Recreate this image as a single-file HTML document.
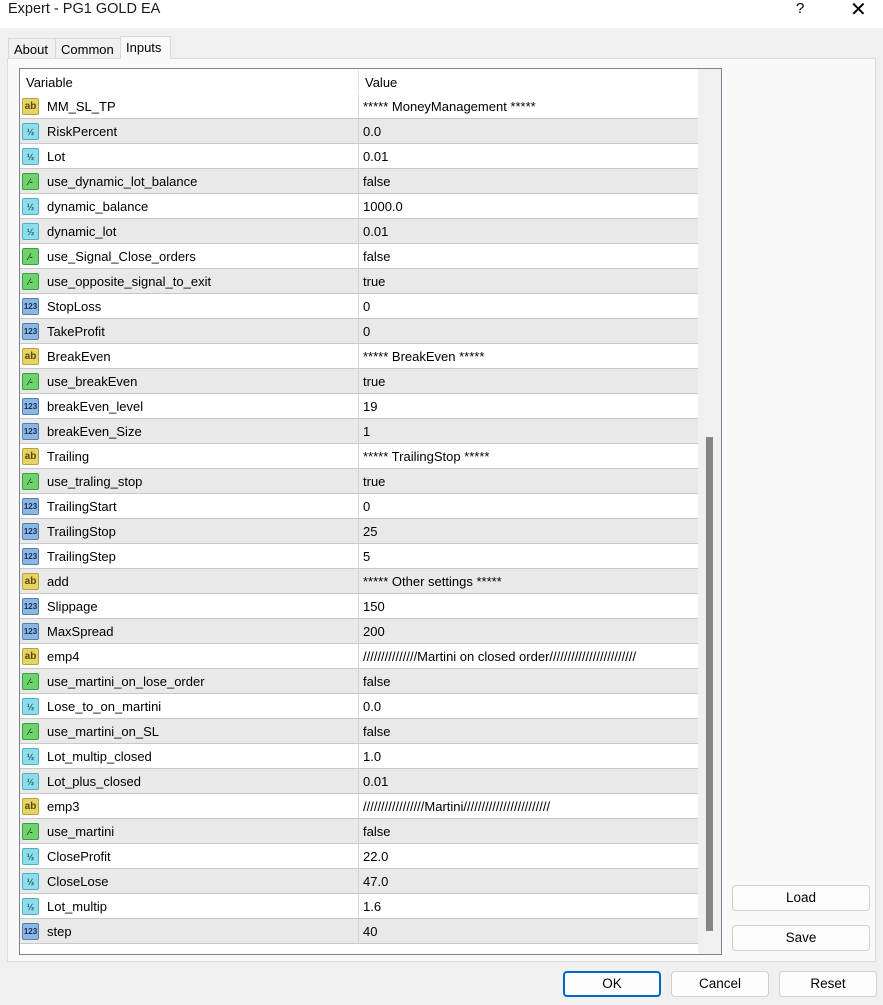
<!DOCTYPE html>
<html><head><meta charset="utf-8"><style>
*{box-sizing:border-box;margin:0;padding:0}
body{width:883px;height:1005px;background:#f0f0f0;font-family:"Liberation Sans",sans-serif;font-size:13px;color:#000;position:relative;overflow:hidden}
.title{position:absolute;left:0;top:0;width:883px;height:28px;background:#fff}
.title .t{position:absolute;left:8px;top:1px;font-size:14.5px;color:#1a1a1a}
.title .q{position:absolute;left:796px;top:0px;font-size:15px}
.title .x{position:absolute;left:850px;top:-3px;font-size:20px;font-weight:300}
.tab{position:absolute;top:38px;height:21px;border:1px solid #d9d9d9;border-bottom:none;background:#f0f0f0;padding:3px 0 0 5px;font-size:13px}
.tab.a{top:36px;height:23px;background:#f9f9f9;padding-top:3px}
.panel{position:absolute;left:7px;top:58px;width:869px;height:904px;background:#f9f9f9;border:1px solid #dcdcdc}
.list{position:absolute;left:19px;top:68px;width:703px;height:887px;border:1px solid #7d8490;background:#fff}
.hdr{position:absolute;left:0;top:0;width:678px;height:25px;background:#fff}
.hdr span{position:absolute;top:6px}
.hdr i{position:absolute;left:338px;top:1px;width:1px;height:22px;background:#e0e0e0}
.rows{position:absolute;left:0;top:25px;width:678px}
.r{height:25px;position:relative;border-bottom:1px solid #c8c8c8;background:#fff}
.r:nth-child(even){background:#e9e9e9}
.r .n{position:absolute;left:27px;top:5px}
.r .v{position:absolute;left:343px;top:5px}
.r .c{position:absolute;left:338px;top:0;width:1px;height:24px;background:#d4d4d4}
.ic{position:absolute;left:2px;top:4px;width:17px;height:17px;border-radius:2px;font-size:9px;font-weight:bold;text-align:center;line-height:16px}
.s{background:#e6d36a;border:1px solid #b8a23a;color:#5a4a00;font-size:10px}
.d{background:#8fdcea;border:1px solid #4cb0c4;color:#1f5f70}
.b{background:#6fd26f;border:1px solid #3a9e3a;color:#145014}
.i{background:#8db6e0;border:1px solid #4f7fb3;color:#13305a;font-size:8px}
.sb{position:absolute;left:678px;top:0;width:23px;height:885px;background:#f0f0f0}
.thumb{position:absolute;left:8px;top:368px;width:7px;height:494px;background:#858585}
.btn{position:absolute;height:26px;border:1px solid #d0d0d0;border-radius:4px;background:#fdfdfd;text-align:center;line-height:24px;font-size:13.5px}
</style></head><body>
<div class="title"><span class="t">Expert - PG1 GOLD EA</span><span class="q">?</span><span class="x">✕</span></div>
<div class="tab" style="left:8px;width:48px">About</div>
<div class="tab" style="left:55px;width:66px">Common</div>
<div class="panel"></div>
<div class="tab a" style="left:120px;width:51px">Inputs</div>
<div class="list">
<div class="hdr"><span style="left:6px">Variable</span><i></i><span style="left:345px">Value</span></div>
<div class="rows">
<div class="r"><div class="ic s">ab</div><span class="n">MM_SL_TP</span><i class="c"></i><span class="v">***** MoneyManagement *****</span></div>
<div class="r"><div class="ic d">½</div><span class="n">RiskPercent</span><i class="c"></i><span class="v">0.0</span></div>
<div class="r"><div class="ic d">½</div><span class="n">Lot</span><i class="c"></i><span class="v">0.01</span></div>
<div class="r"><div class="ic b">⁄-</div><span class="n">use_dynamic_lot_balance</span><i class="c"></i><span class="v">false</span></div>
<div class="r"><div class="ic d">½</div><span class="n">dynamic_balance</span><i class="c"></i><span class="v">1000.0</span></div>
<div class="r"><div class="ic d">½</div><span class="n">dynamic_lot</span><i class="c"></i><span class="v">0.01</span></div>
<div class="r"><div class="ic b">⁄-</div><span class="n">use_Signal_Close_orders</span><i class="c"></i><span class="v">false</span></div>
<div class="r"><div class="ic b">⁄-</div><span class="n">use_opposite_signal_to_exit</span><i class="c"></i><span class="v">true</span></div>
<div class="r"><div class="ic i">123</div><span class="n">StopLoss</span><i class="c"></i><span class="v">0</span></div>
<div class="r"><div class="ic i">123</div><span class="n">TakeProfit</span><i class="c"></i><span class="v">0</span></div>
<div class="r"><div class="ic s">ab</div><span class="n">BreakEven</span><i class="c"></i><span class="v">***** BreakEven *****</span></div>
<div class="r"><div class="ic b">⁄-</div><span class="n">use_breakEven</span><i class="c"></i><span class="v">true</span></div>
<div class="r"><div class="ic i">123</div><span class="n">breakEven_level</span><i class="c"></i><span class="v">19</span></div>
<div class="r"><div class="ic i">123</div><span class="n">breakEven_Size</span><i class="c"></i><span class="v">1</span></div>
<div class="r"><div class="ic s">ab</div><span class="n">Trailing</span><i class="c"></i><span class="v">***** TrailingStop *****</span></div>
<div class="r"><div class="ic b">⁄-</div><span class="n">use_traling_stop</span><i class="c"></i><span class="v">true</span></div>
<div class="r"><div class="ic i">123</div><span class="n">TrailingStart</span><i class="c"></i><span class="v">0</span></div>
<div class="r"><div class="ic i">123</div><span class="n">TrailingStop</span><i class="c"></i><span class="v">25</span></div>
<div class="r"><div class="ic i">123</div><span class="n">TrailingStep</span><i class="c"></i><span class="v">5</span></div>
<div class="r"><div class="ic s">ab</div><span class="n">add</span><i class="c"></i><span class="v">***** Other settings *****</span></div>
<div class="r"><div class="ic i">123</div><span class="n">Slippage</span><i class="c"></i><span class="v">150</span></div>
<div class="r"><div class="ic i">123</div><span class="n">MaxSpread</span><i class="c"></i><span class="v">200</span></div>
<div class="r"><div class="ic s">ab</div><span class="n">emp4</span><i class="c"></i><span class="v">///////////////Martini on closed order////////////////////////</span></div>
<div class="r"><div class="ic b">⁄-</div><span class="n">use_martini_on_lose_order</span><i class="c"></i><span class="v">false</span></div>
<div class="r"><div class="ic d">½</div><span class="n">Lose_to_on_martini</span><i class="c"></i><span class="v">0.0</span></div>
<div class="r"><div class="ic b">⁄-</div><span class="n">use_martini_on_SL</span><i class="c"></i><span class="v">false</span></div>
<div class="r"><div class="ic d">½</div><span class="n">Lot_multip_closed</span><i class="c"></i><span class="v">1.0</span></div>
<div class="r"><div class="ic d">½</div><span class="n">Lot_plus_closed</span><i class="c"></i><span class="v">0.01</span></div>
<div class="r"><div class="ic s">ab</div><span class="n">emp3</span><i class="c"></i><span class="v">/////////////////Martini////////////////////////</span></div>
<div class="r"><div class="ic b">⁄-</div><span class="n">use_martini</span><i class="c"></i><span class="v">false</span></div>
<div class="r"><div class="ic d">½</div><span class="n">CloseProfit</span><i class="c"></i><span class="v">22.0</span></div>
<div class="r"><div class="ic d">½</div><span class="n">CloseLose</span><i class="c"></i><span class="v">47.0</span></div>
<div class="r"><div class="ic d">½</div><span class="n">Lot_multip</span><i class="c"></i><span class="v">1.6</span></div>
<div class="r"><div class="ic i">123</div><span class="n">step</span><i class="c"></i><span class="v">40</span></div>
</div>
<div class="sb"><div class="thumb"></div></div>
</div>
<div class="btn" style="left:732px;top:885px;width:138px">Load</div>
<div class="btn" style="left:732px;top:925px;width:138px">Save</div>
<div class="btn" style="left:563px;top:971px;width:98px;border:2px solid #0067c0;line-height:22px">OK</div>
<div class="btn" style="left:671px;top:971px;width:98px">Cancel</div>
<div class="btn" style="left:779px;top:971px;width:98px">Reset</div>
</body></html>
